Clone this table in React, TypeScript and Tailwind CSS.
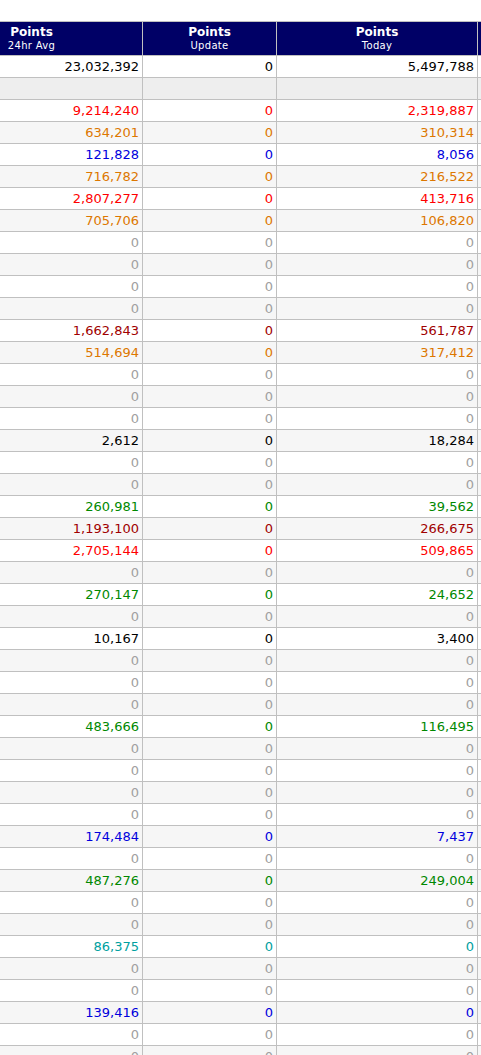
import React from 'react';

type Row = { a: string; b: string; c: string; color: string };

const RED = 'text-[#ff0000]';
const ORANGE = 'text-[#dd7700]';
const BLUE = 'text-[#0000dd]';
const MAROON = 'text-[#a00000]';
const GREEN = 'text-[#008800]';
const TEAL = 'text-[#00a0a0]';
const GRAY = 'text-[#a0a0a0]';
const BLACK = 'text-black';

const z = (): Row => ({ a: '0', b: '0', c: '0', color: GRAY });

const ROWS: Row[] = [
  { a: '9,214,240', b: '0', c: '2,319,887', color: RED },
  { a: '634,201', b: '0', c: '310,314', color: ORANGE },
  { a: '121,828', b: '0', c: '8,056', color: BLUE },
  { a: '716,782', b: '0', c: '216,522', color: ORANGE },
  { a: '2,807,277', b: '0', c: '413,716', color: RED },
  { a: '705,706', b: '0', c: '106,820', color: ORANGE },
  z(), z(), z(), z(),
  { a: '1,662,843', b: '0', c: '561,787', color: MAROON },
  { a: '514,694', b: '0', c: '317,412', color: ORANGE },
  z(), z(), z(),
  { a: '2,612', b: '0', c: '18,284', color: BLACK },
  z(), z(),
  { a: '260,981', b: '0', c: '39,562', color: GREEN },
  { a: '1,193,100', b: '0', c: '266,675', color: MAROON },
  { a: '2,705,144', b: '0', c: '509,865', color: RED },
  z(),
  { a: '270,147', b: '0', c: '24,652', color: GREEN },
  z(),
  { a: '10,167', b: '0', c: '3,400', color: BLACK },
  z(), z(), z(),
  { a: '483,666', b: '0', c: '116,495', color: GREEN },
  z(), z(), z(), z(),
  { a: '174,484', b: '0', c: '7,437', color: BLUE },
  z(),
  { a: '487,276', b: '0', c: '249,004', color: GREEN },
  z(), z(),
  { a: '86,375', b: '0', c: '0', color: TEAL },
  z(), z(),
  { a: '139,416', b: '0', c: '0', color: BLUE },
  z(), z(),
];

const HEADERS = [
  { title: 'Points', sub: '24hr Avg' },
  { title: 'Points', sub: 'Update' },
  { title: 'Points', sub: 'Today' },
  { title: '', sub: '' },
];

const cell = 'h-[22px] border border-[#c0c0c0] px-[3px] text-right align-middle leading-none';

export default function App() {
  return (
    <div className="w-[481px] h-[1055px] overflow-hidden bg-white font-['DejaVu_Sans',Verdana,sans-serif] text-[13px]">
      <div className="h-[21px]" />
      <table className="ml-[-80px] table-fixed border-collapse w-[657px]">
        <colgroup>
          <col className="w-[222px]" />
          <col className="w-[134px]" />
          <col className="w-[201px]" />
          <col className="w-[100px]" />
        </colgroup>
        <thead>
          <tr>
            {HEADERS.map((h, i) => (
              <th
                key={i}
                className="h-[34px] border border-[#c0c0c0] bg-[#000066] text-center align-middle font-normal text-white"
              >
                <div className="text-[12px] font-bold leading-[14px]">{h.title}</div>
                <div className="text-[10px] leading-[14px] tracking-[0.3px]">{h.sub}</div>
              </th>
            ))}
          </tr>
        </thead>
        <tbody>
          <tr className="bg-white">
            <td className={`${cell} text-black`}>23,032,392</td>
            <td className={`${cell} text-black`}>0</td>
            <td className={`${cell} text-black`}>5,497,788</td>
            <td className={cell} />
          </tr>
          <tr className="bg-[#eeeeee]">
            <td className={cell} />
            <td className={cell} />
            <td className={cell} />
            <td className={cell} />
          </tr>
          {ROWS.map((r, i) => (
            <tr key={i} className={i % 2 === 0 ? 'bg-white' : 'bg-[#f6f6f6]'}>
              <td className={`${cell} ${r.color}`}>{r.a}</td>
              <td className={`${cell} ${r.color}`}>{r.b}</td>
              <td className={`${cell} ${r.color}`}>{r.c}</td>
              <td className={cell} />
            </tr>
          ))}
        </tbody>
      </table>
    </div>
  );
}
